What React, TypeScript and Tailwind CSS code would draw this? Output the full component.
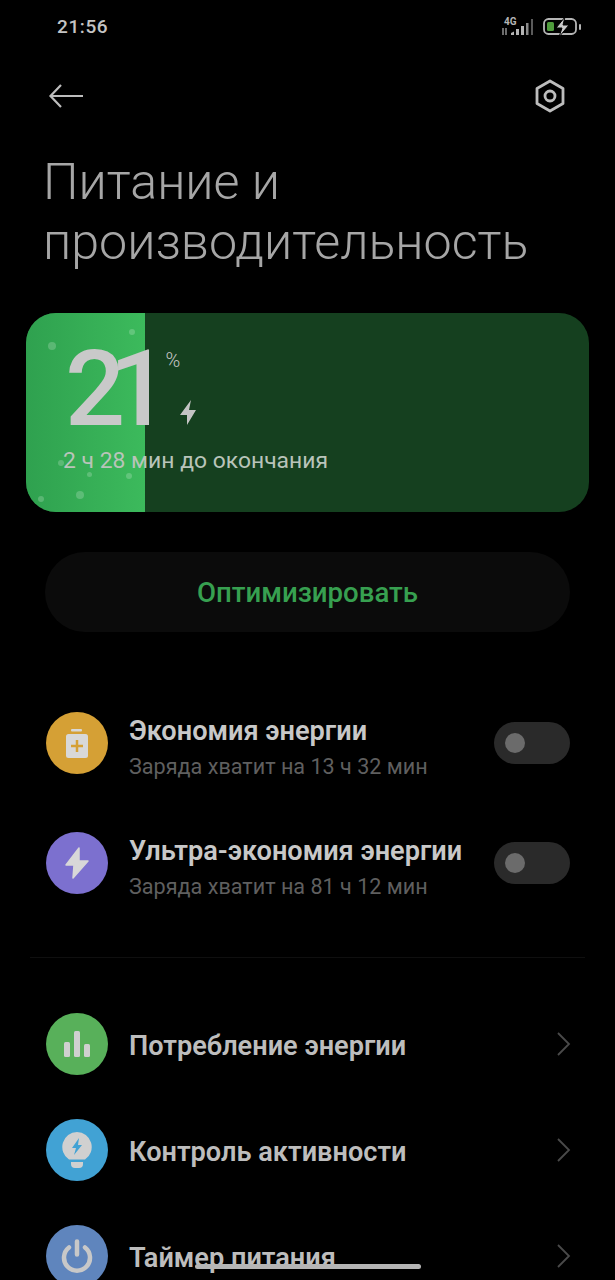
import React from 'react';

function Toggle() {
  return (
    <div className="ml-auto flex h-[42px] w-[76px] shrink-0 items-center rounded-full bg-[#2a2a2a] pl-[11px]">
      <div className="h-[20px] w-[20px] rounded-full bg-[#6b6b6b]" />
    </div>
  );
}

function ModeRow({ color, icon, title, sub }: { color: string; icon: React.ReactNode; title: string; sub: string }) {
  return (
    <div className="flex h-[62px] items-center">
      <div className={`flex h-[62px] w-[62px] shrink-0 items-center justify-center rounded-full ${color}`}>{icon}</div>
      <div className="ml-[21px] flex flex-col pt-[9px]">
        <span className="text-[27.150px] leading-[32px] font-semibold text-[#c8c8c8]">{title}</span>
        <span className="mt-[7px] text-[21.600px] leading-[26px] text-[#5f5f5f]">{sub}</span>
      </div>
      <Toggle />
    </div>
  );
}

function LinkRow({ color, icon, title }: { color: string; icon: React.ReactNode; title: string }) {
  return (
    <div className="flex h-[62px] items-center">
      <div className={`flex h-[62px] w-[62px] shrink-0 items-center justify-center rounded-full ${color}`}>{icon}</div>
      <span className="ml-[21px] pt-[4px] text-[27.150px] leading-[32px] font-semibold text-[#bdbdbd]">{title}</span>
      <svg width="16" height="26" viewBox="0 0 16 26" fill="none" stroke="#4a4a4a" strokeWidth="1.800" className="ml-auto mr-[-2px]">
        <path d="M2 2l11 11L2 24" />
      </svg>
    </div>
  );
}

const Dot = ({ className }: { className: string }) => <div className={`absolute rounded-full bg-white/20 ${className}`} />;

export default function App() {
  return (
    <div className="relative h-[1280px] w-[615px] overflow-hidden bg-black font-['Roboto',sans-serif]">
      {/* status bar */}
      <div className="flex h-[54px] items-center pl-[57px] pr-[33px]">
        <span className="text-[19px] font-medium tracking-[0.6px] text-[#c4c4c4]">21:56</span>
        <div className="ml-auto flex items-center gap-[9px]">
          <svg width="32" height="20" viewBox="0 0 32 20" className="text-[#b5b5b5]">
            <text x="2" y="8" fontSize="10" fontWeight="700" fill="currentColor" fontFamily="Roboto, sans-serif">4G</text>
            <path d="M1 11v7M4 18v-7" stroke="currentColor" strokeWidth="1.200" />
            <path d="M9 18v-2l3-1.500V18zM14 18v-6h3v6zM19 18V9h3v9z" fill="currentColor" />
            <path d="M24 18V6h2.500v12z" fill="#8a8a8a" />
            <path d="M29 18V2h2v16z" fill="#5a5a5a" />
          </svg>
          <svg width="39" height="20" viewBox="0 0 39 20">
            <rect x="1" y="2" width="32" height="15" rx="4.500" fill="none" stroke="#b5b5b5" strokeWidth="1.800" />
            <rect x="4" y="5" width="7" height="9" rx="1.500" fill="#4f9c3c" />
            <path d="M22 0l-9 11h6l-3 9 10-12h-6z" fill="#c9c9c9" stroke="#000" strokeWidth="1" />
            <rect x="36" y="7" width="2" height="6" rx="1" fill="#b5b5b5" />
          </svg>
        </div>
      </div>

      {/* top bar */}
      <div className="flex h-[84px] items-center justify-between pl-[48px] pr-[49px]">
        <svg width="36" height="26" viewBox="0 0 36 26" fill="none" stroke="#bdbdbd" strokeWidth="2.200">
          <path d="M35 13H3M13 2L2.500 13 13 24" />
        </svg>
        <svg width="32" height="34" viewBox="0 0 32 34" fill="none" stroke="#bdbdbd" strokeWidth="2.800">
          <path d="M16 2l13 7.500v15L16 32 3 24.500V9.500z" strokeLinejoin="round" />
          <circle cx="16" cy="17" r="5" />
        </svg>
      </div>

      {/* title */}
      <h1 className="mt-[14px] pl-[43px] text-[50.200px] leading-[59.500px] font-light text-[#a6a6a6]">
        Питание и<br />производительность
      </h1>

      {/* battery card */}
      <div className="relative mx-[26px] mt-[42px] h-[199px] overflow-hidden rounded-[30px] bg-[#15401f]">
        <div className="absolute inset-y-0 left-0 w-[119px] bg-gradient-to-r from-[#2fa14f] to-[#3cba5c]">
          <Dot className="left-[22px] top-[29px] h-[8px] w-[8px]" />
          <Dot className="left-[103px] top-[16px] h-[6px] w-[6px]" />
          <Dot className="left-[32px] top-[147px] h-[6px] w-[6px]" />
          <Dot className="left-[61px] top-[159px] h-[5px] w-[5px]" />
          <Dot className="left-[100px] top-[160px] h-[6px] w-[6px]" />
          <Dot className="left-[50px] top-[178px] h-[8px] w-[8px]" />
          <Dot className="left-[12px] top-[183px] h-[6px] w-[6px]" />
        </div>
        <div className="relative flex h-full flex-col pl-[37px]">
          <div className="ml-[2px] flex h-[112px] items-start pt-[26px]">
            <span className="text-[106px] leading-[100px] font-medium tracking-[-16px] text-[#c9c9c9]">21</span>
            <span className="ml-[12px] mt-[11px] text-[20px] leading-[20px] font-light text-[#c4c4c4]">%</span>
            <svg width="16" height="25" viewBox="0 0 16 25" className="ml-[0px] mt-[61px]" fill="#c4c4c4">
              <path d="M11 0L0 15h7v10l9-15H9z" />
            </svg>
          </div>
          <span className="mt-[22px] text-[22.900px] leading-[28px] text-[#b9c4ba]">2 ч 28 мин до окончания</span>
        </div>
      </div>

      {/* optimize button */}
      <div className="mx-[45px] mt-[40px] flex h-[80px] items-center justify-center rounded-full bg-[#0b0b0b]">
        <span className="pt-[2px] text-[27.600px] font-medium text-[#37a050]">Оптимизировать</span>
      </div>

      {/* modes */}
      <div className="ml-[46px] mr-[45px] mt-[80px] flex flex-col gap-[58px]">
        <ModeRow
          color="bg-[#d5a035]"
          title="Экономия энергии"
          sub="Заряда хватит на 13 ч 32 мин"
          icon={
            <svg width="22" height="29" viewBox="0 0 22 29">
              <rect x="5" y="0" width="11" height="2.500" rx="1" fill="#d8d8d8" />
              <rect x="0" y="5" width="22" height="24" rx="2.500" fill="#d8d8d8" />
              <path d="M11 11v12M5 17h12" stroke="#d5a035" strokeWidth="2.500" />
            </svg>
          }
        />
        <ModeRow
          color="bg-[#7c70cf]"
          title="Ультра-экономия энергии"
          sub="Заряда хватит на 81 ч 12 мин"
          icon={
            <svg width="26" height="32" viewBox="0 0 26 32" fill="#d8d8d8">
              <path d="M15 1L2 18h8l-1 13 15-17h-9z" stroke="#d8d8d8" strokeWidth="1.500" strokeLinejoin="round" />
            </svg>
          }
        />
      </div>

      <div className="mx-[30px] mt-[63px] h-px bg-[#0f0f0f]" />

      {/* links */}
      <div className="ml-[46px] mr-[45px] mt-[55px] flex flex-col gap-[44px]">
        <LinkRow
          color="bg-[#58b05a]"
          title="Потребление энергии"
          icon={
            <svg width="26" height="26" viewBox="0 0 26 26" fill="#d0d0d0">
              <rect x="0" y="11" width="6" height="15" rx="1.500" />
              <rect x="10" y="0" width="6" height="26" rx="1.500" />
              <rect x="20" y="13" width="6" height="13" rx="1.500" />
            </svg>
          }
        />
        <LinkRow
          color="bg-[#41a2d4]"
          title="Контроль активности"
          icon={
            <svg width="30" height="36" viewBox="0 0 30 36">
              <path d="M15 0a15 15 0 0 1 8 27.500H7A15 15 0 0 1 15 0z" fill="#d0d0d0" />
              <path d="M9 30h12v2a4 4 0 0 1-4 4h-4a4 4 0 0 1-4-4z" fill="#d0d0d0" />
              <path d="M17 6l-7 10h4l-2 7 8-10h-4z" fill="#41a2d4" />
            </svg>
          }
        />
        <LinkRow
          color="bg-[#5f85bd]"
          title="Таймер питания"
          icon={
            <svg width="32" height="34" viewBox="0 0 32 34" fill="none" stroke="#c8c8c8" strokeWidth="4.500" strokeLinecap="round">
              <path d="M16 2.500v13M8 8.500a13 13 0 1 0 16 0" />
            </svg>
          }
        />
      </div>

      {/* gesture bar */}
      <div className="absolute left-[195px] top-[1264px] h-[5px] w-[226px] rounded-full bg-[#b5b5b5]" />
    </div>
  );
}
